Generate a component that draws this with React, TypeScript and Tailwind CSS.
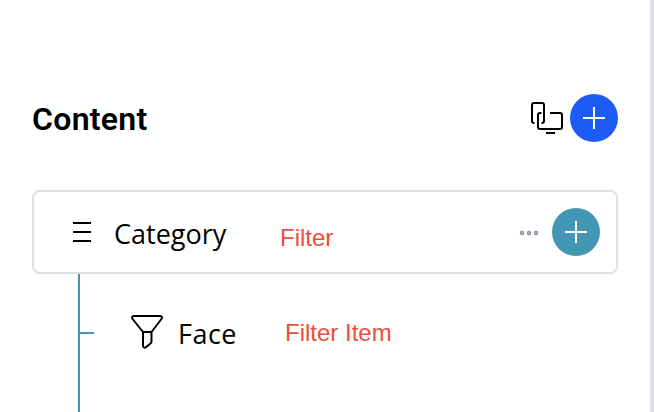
import type { ReactNode } from "react";

// --- ICONS ---
function PlusIcon() {
  return (
    <svg width="24" height="24" viewBox="0 0 24 24" fill="none" stroke="currentColor" strokeWidth="2">
      <path d="M12 1v22M1 12h22" />
    </svg>
  );
}

function DevicesIcon() {
  return (
    <svg width="34" height="34" viewBox="0 0 34 34" fill="none" stroke="currentColor" strokeWidth="2">
      <path d="M4.500 22H4a2 2 0 0 1-2-2V4a2 2 0 0 1 2-2h8a2 2 0 0 1 2 2v16a2 2 0 0 1-2 2h-.5" />
      <path d="M11.500 12H10a2 2 0 0 0-2 2v12a2 2 0 0 0 2 2h20a2 2 0 0 0 2-2V14a2 2 0 0 0-2-2H20" />
      <path d="M16 32h9" />
    </svg>
  );
}

function MenuIcon() {
  return (
    <svg width="18" height="20" viewBox="0 0 18 20" fill="none" stroke="currentColor" strokeWidth="2">
      <path d="M0 1h18M0 10h18M0 19h18" />
    </svg>
  );
}

function FunnelIcon() {
  return (
    <svg width="32" height="34" viewBox="0 0 32 34" fill="none" stroke="currentColor" strokeWidth="2" strokeLinejoin="round">
      <path d="M2.800 1h26.400c1.800 0 2.200 1.700 1.200 3L20.500 17v9.500c0 1-.5 1.700-1.300 2.300l-4 3.300c-1.500 1.100-3.200.4-3.200-1.600V17L1.600 4C.6 2.700 1 1 2.800 1z" />
      <path d="M12 17h8.500" />
    </svg>
  );
}

function MoreIcon() {
  return (
    <svg width="20" height="6" viewBox="0 0 20 6" fill="#b4b9c4" stroke="#868c9b" strokeWidth="1.2">
      <circle cx="3" cy="3" r="1.600" />
      <circle cx="10" cy="3" r="1.600" />
      <circle cx="17" cy="3" r="1.600" />
    </svg>
  );
}

// --- TREE ITEM ---
function TreeItem({ children }: { children: ReactNode }) {
  return (
    <li className="flex h-[118px] items-center">
      <span className="h-0.5 w-3.5 bg-[#4397b5]" />
      {children}
    </li>
  );
}

export default function App() {
  return (
    <div className="h-screen overflow-hidden border-r-4 border-[#dfe1e8] bg-white pt-[94px] pr-8 pl-8 text-black">
      <header className="flex h-12 items-center">
        <h1 className="pt-0.5 font-[Roboto,sans-serif] text-[32px] leading-none font-semibold tracking-[0.3px]">
          Content
        </h1>
        <div className="ml-auto flex items-center gap-1.5">
          <DevicesIcon />
          <button className="flex size-12 items-center justify-center rounded-full bg-[#1c5cf5] text-white">
            <PlusIcon />
          </button>
        </div>
      </header>

      <section className="mt-12 flex h-[84px] items-center rounded-lg border-2 border-[#dde1e6] pr-4 pl-[39px]">
        <MenuIcon />
        <h2 className="ml-[23px] w-[166px] pt-0.5 font-['Open_Sans',sans-serif] text-[27px] leading-none">
          Category
        </h2>
        <span className="pt-3 font-['Liberation_Sans',sans-serif] text-2xl leading-none text-[#ee4d3a]">
          Filter
        </span>
        <button className="ml-auto pt-0.5">
          <MoreIcon />
        </button>
        <button className="ml-[13px] flex size-12 items-center justify-center rounded-full bg-[#4397b5] text-white">
          <PlusIcon />
        </button>
      </section>

      <ul className="ml-[46px] h-[138px] border-l-2 border-[#4397b5]">
        <TreeItem>
          <span className="ml-[37px] pb-[3px]">
            <FunnelIcon />
          </span>
          <span className="ml-[15px] w-[107px] font-['Open_Sans',sans-serif] text-[27px] leading-none tracking-[0.5px]">
            Face
          </span>
          <span className="font-['Liberation_Sans',sans-serif] text-2xl leading-none text-[#ee4d3a]">
            Filter Item
          </span>
        </TreeItem>
      </ul>
    </div>
  );
}
